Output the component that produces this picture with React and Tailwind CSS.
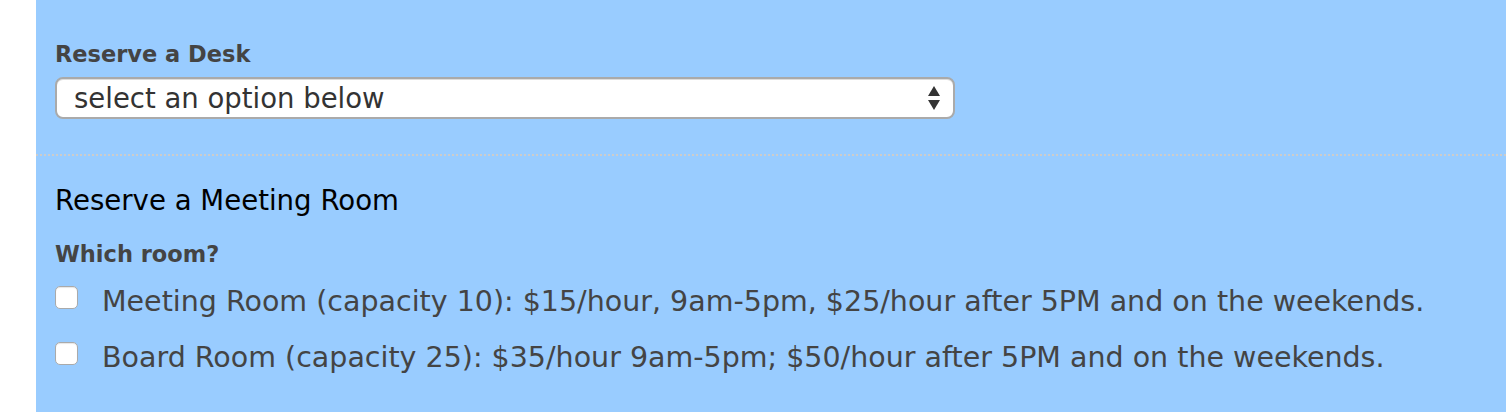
import React from 'react';

const rooms = [
  'Meeting Room (capacity 10): $15/hour, 9am-5pm, $25/hour after 5PM and on the weekends.',
  'Board Room (capacity 25): $35/hour 9am-5pm; $50/hour after 5PM and on the weekends.',
];

const App = () => {
  return (
    <div className="flex h-[412px] w-[1506px] bg-white font-['DejaVu_Sans',sans-serif]">
      <div className="w-[36px] shrink-0" />
      <div className="flex-1 bg-[#99ccff]">
        {/* Desk */}
        <div className="pl-[19px] pt-[40px] pb-[35px]">
          <label className="block text-[22.5px] font-bold leading-[28px] text-[#444]">Reserve a Desk</label>
          <div className="mt-[9px] flex h-[42px] w-[900px] items-center justify-between rounded-[8px] border-2 border-[#aaa] bg-white pl-[17px] pr-[12px] shadow-[inset_0_1px_0_#ddd]">
            <span className="text-[27.5px] leading-[32px] text-[#333]">select an option below</span>
            <svg width="14" height="26" viewBox="0 0 14 26">
              <path d="M7 1 L13 11 L1 11 Z" fill="#333" />
              <path d="M1 15 L13 15 L7 25 Z" fill="#333" />
            </svg>
          </div>
        </div>

        {/* dotted divider */}
        <div className="h-[2px] bg-[repeating-linear-gradient(90deg,#cccccc_0px,#cccccc_2px,transparent_2px,transparent_4px)]" />

        {/* Meeting room */}
        <div className="pl-[19px] pt-[29px]">
          <h3 className="text-[27.6px] leading-[32px] text-black">Reserve a Meeting Room</h3>
          <label className="mt-[23px] block text-[22.5px] font-bold leading-[28px] text-[#444]">Which room?</label>
          <div className="mt-[17px] flex flex-col gap-[22px]">
            {rooms.map((room) => (
              <label key={room} className="flex items-start gap-[24px]">
                <span className="mt-[1px] h-[23px] w-[23px] shrink-0 rounded-[5px] border border-[#aaa] bg-white shadow-[inset_0_1px_1px_rgba(0,0,0,0.1)]" />
                <span className="text-[28.5px] leading-[34px] text-[#444]">{room}</span>
              </label>
            ))}
          </div>
        </div>
      </div>
    </div>
  );
};

export default App;
